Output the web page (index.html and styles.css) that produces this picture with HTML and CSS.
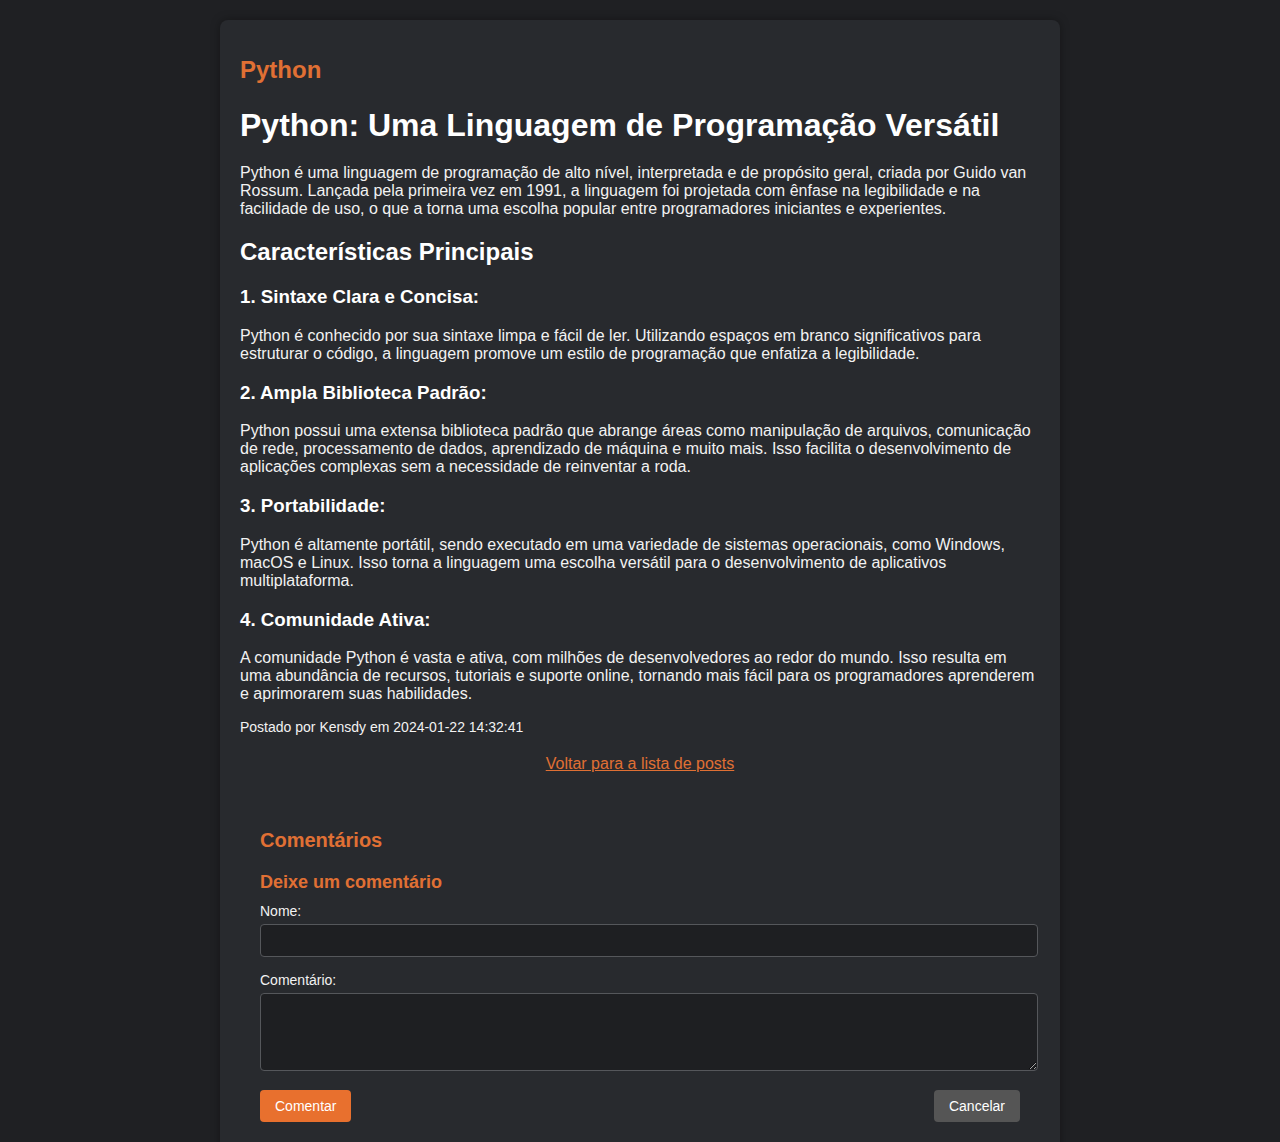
FILE: index.html
```html
<!DOCTYPE html>
<html lang="pt-BR">
<head>
<meta charset="utf-8">
<title>Python</title>
<link rel="stylesheet" href="styles.css">
</head>
<body>
<div class="card">
  <h2 class="category">Python</h2>
  <h1 class="title">Python: Uma Linguagem de Programação Versátil</h1>
  <p>Python é uma linguagem de programação de alto nível, interpretada e de propósito geral, criada por Guido van Rossum. Lançada pela primeira vez em 1991, a linguagem foi projetada com ênfase na legibilidade e na facilidade de uso, o que a torna uma escolha popular entre programadores iniciantes e experientes.</p>
  <h2>Características Principais</h2>
  <h3>1. Sintaxe Clara e Concisa:</h3>
  <p>Python é conhecido por sua sintaxe limpa e fácil de ler. Utilizando espaços em branco significativos para estruturar o código, a linguagem promove um estilo de programação que enfatiza a legibilidade.</p>
  <h3>2. Ampla Biblioteca Padrão:</h3>
  <p>Python possui uma extensa biblioteca padrão que abrange áreas como manipulação de arquivos, comunicação de rede, processamento de dados, aprendizado de máquina e muito mais. Isso facilita o desenvolvimento de aplicações complexas sem a necessidade de reinventar a roda.</p>
  <h3>3. Portabilidade:</h3>
  <p>Python é altamente portátil, sendo executado em uma variedade de sistemas operacionais, como Windows, macOS e Linux. Isso torna a linguagem uma escolha versátil para o desenvolvimento de aplicativos multiplataforma.</p>
  <h3>4. Comunidade Ativa:</h3>
  <p>A comunidade Python é vasta e ativa, com milhões de desenvolvedores ao redor do mundo. Isso resulta em uma abundância de recursos, tutoriais e suporte online, tornando mais fácil para os programadores aprenderem e aprimorarem suas habilidades.</p>
  <p class="meta">Postado por Kensdy em 2024-01-22 14:32:41</p>
  <div class="back"><a href="#">Voltar para a lista de posts</a></div>

  <section class="comments">
    <h3 class="comments-title">Comentários</h3>
    <h4 class="form-title">Deixe um comentário</h4>
    <form class="comment-form">
      <label for="nome">Nome:</label>
      <input id="nome" type="text">
      <label for="comentario">Comentário:</label>
      <textarea id="comentario"></textarea>
      <div class="actions">
        <button type="button" class="btn btn-primary">Comentar</button>
        <button type="button" class="btn btn-secondary">Cancelar</button>
      </div>
    </form>
  </section>
</div>
</body>
</html>
```

FILE: styles.css
```css
html, body {
  margin: 0;
  background: #1f2023;
}

body {
  font-family: "Liberation Sans", Arial, sans-serif;
  color: #f2f2f2;
  padding: 20px 0;
}

.card {
  width: 800px;
  margin: 0 auto;
  padding: 16px 20px 20px;
  background: #282a2e;
  border-radius: 8px;
  box-shadow: 0 0 10px rgba(0, 0, 0, 0.35);
}

h1, h2, h3 {
  color: #ffffff;
}

.category {
  color: #e07034;
  font-size: 24px;
}

.title {
  font-size: 32px;
  margin: 23px 0 20.5px;
}

p {
  font-size: 16px;
  line-height: normal;
}

.meta {
  font-size: 14px;
}

.back {
  text-align: center;
  margin: 20px 0 0;
}

.back a {
  color: #e07034;
}

.comments {
  margin-top: 36px;
  padding: 20px;
}

.comments-title {
  color: #e07034;
  font-size: 20px;
  margin: 0 0 20px;
}

.form-title {
  color: #e07034;
  font-size: 18px;
  margin: 0 0 10px;
}

.comment-form label {
  display: block;
  font-size: 14px;
  margin-bottom: 5px;
}

.comment-form input,
.comment-form textarea {
  display: block;
  width: 100%;
  padding: 8px;
  margin: 0 0 15px;
  background: #1e1f22;
  border: 1px solid #55575b;
  border-radius: 4px;
  color: #f2f2f2;
  font-family: inherit;
  font-size: 14px;
}

.comment-form input {
  height: 15px;
}

.comment-form textarea {
  height: 60px;
  margin-bottom: 19px;
}

.actions {
  display: flex;
  justify-content: space-between;
}

.btn {
  border: none;
  border-radius: 4px;
  padding: 8px 15px;
  font-family: inherit;
  font-size: 14px;
  color: #ffffff;
  height: 32px;
}

.btn-primary {
  background: #e8702e;
}

.btn-secondary {
  background: #555555;
}
```
